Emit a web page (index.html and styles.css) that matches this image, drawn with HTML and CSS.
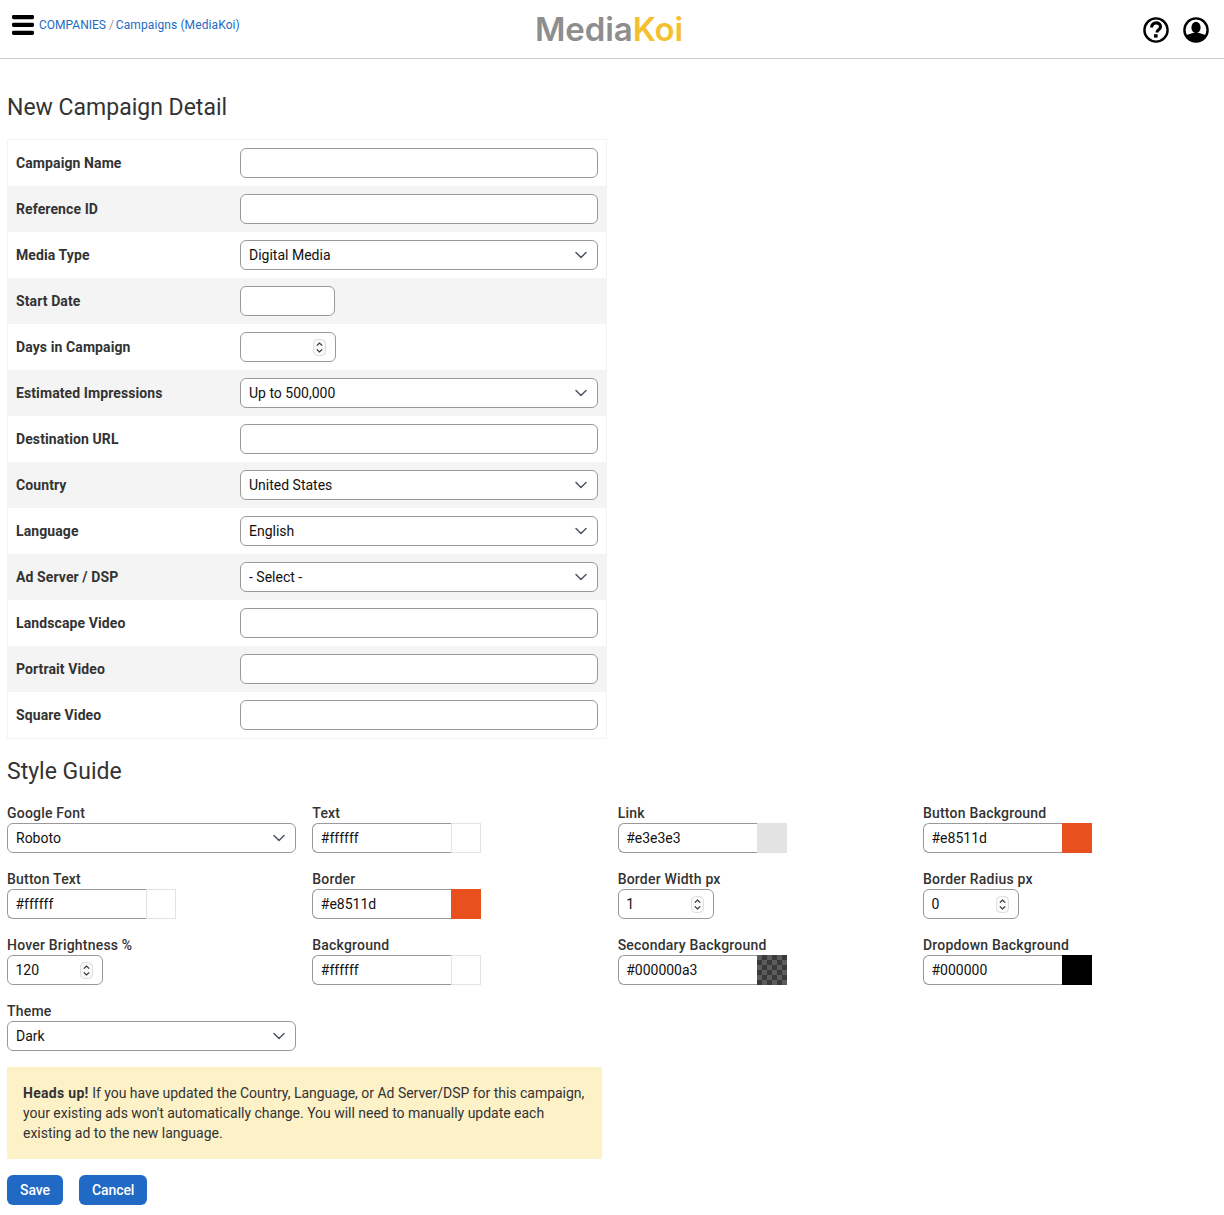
FILE: index.html
```html
<!DOCTYPE html>
<html lang="en">
<head>
    <meta charset="UTF-8">
    <title>New Campaign Detail</title>
    <link rel="stylesheet" href="styles.css">
</head>
<body>

<svg class="sprites" width="0" height="0">
    <symbol id="chevron" viewBox="0 0 12 8">
        <path d="M1 1.5l5 5 5-5" fill="none" stroke="#4b5563" stroke-width="1.5" stroke-linecap="round" stroke-linejoin="round"/>
    </symbol>
    <symbol id="spin" viewBox="0 0 13 17">
        <rect x="0.5" y="0.5" width="12" height="16" rx="4" fill="#fafafa" stroke="#dcdcdc"/>
        <path d="M3.8 6.6l2.7-2.6 2.7 2.6M3.8 10.4l2.7 2.6 2.7-2.6" fill="none" stroke="#333" stroke-width="1.2"/>
    </symbol>
</svg>

<header class="topbar">
    <div class="topbar-left">
        <svg class="burger" width="22" height="20" viewBox="0 0 22 20">
            <rect y="0" width="22" height="4.2" rx="1.4"/>
            <rect y="7.8" width="22" height="4.2" rx="1.4"/>
            <rect y="15.8" width="22" height="4.2" rx="1.4"/>
        </svg>
        <nav class="crumbs"><a href="#">COMPANIES</a> <span>/</span> <a href="#" class="current">Campaigns (MediaKoi)</a></nav>
    </div>
    <div class="logo">Media<span>Koi</span></div>
    <div class="topbar-right">
        <svg width="26" height="26" viewBox="0 0 26 26">
            <circle cx="13" cy="13" r="11.6" fill="none" stroke="#000" stroke-width="2.4"/>
            <path d="M8.6 10.4c0-2.9 2-4.5 4.5-4.5 2.7 0 4.4 1.6 4.4 3.8 0 1.7-1 2.6-2.1 3.3-1 .7-1.4 1.1-1.4 2.5" fill="none" stroke="#000" stroke-width="3.2"/>
            <rect x="11" y="17.2" width="3.6" height="3.4" fill="#000"/>
        </svg>
        <svg width="26" height="26" viewBox="0 0 26 26">
            <defs><clipPath id="user-clip"><circle cx="13" cy="13" r="11"/></clipPath></defs>
            <g clip-path="url(#user-clip)">
                <ellipse cx="13" cy="10.5" rx="4.6" ry="5.8"/>
                <path d="M2 26v-6c0-1.4 1.2-2 3-2.6l5-1.5h6l5 1.5c1.8.6 3 1.2 3 2.6v6z"/>
            </g>
            <circle cx="13" cy="13" r="11.6" fill="none" stroke="#000" stroke-width="2.4"/>
        </svg>
    </div>
</header>

<main class="page">
    <h1>New Campaign Detail</h1>

    <div class="detail-table">
        <div class="row"><label>Campaign Name</label><input class="field" type="text"></div>
        <div class="row"><label>Reference ID</label><input class="field" type="text"></div>
        <div class="row"><label>Media Type</label>
            <div class="select-wrap"><select class="field"><option>Digital Media</option></select><svg class="chevron"><use href="#chevron"/></svg></div>
        </div>
        <div class="row"><label>Start Date</label><input class="field date" type="text"></div>
        <div class="row"><label>Days in Campaign</label>
            <div class="number-wrap"><input class="field" type="text"><svg class="spin"><use href="#spin"/></svg></div>
        </div>
        <div class="row"><label>Estimated Impressions</label>
            <div class="select-wrap"><select class="field"><option>Up to 500,000</option></select><svg class="chevron"><use href="#chevron"/></svg></div>
        </div>
        <div class="row"><label>Destination URL</label><input class="field" type="text"></div>
        <div class="row"><label>Country</label>
            <div class="select-wrap"><select class="field"><option>United States</option></select><svg class="chevron"><use href="#chevron"/></svg></div>
        </div>
        <div class="row"><label>Language</label>
            <div class="select-wrap"><select class="field"><option>English</option></select><svg class="chevron"><use href="#chevron"/></svg></div>
        </div>
        <div class="row"><label>Ad Server / DSP</label>
            <div class="select-wrap"><select class="field"><option>- Select -</option></select><svg class="chevron"><use href="#chevron"/></svg></div>
        </div>
        <div class="row"><label>Landscape Video</label><input class="field" type="text"></div>
        <div class="row"><label>Portrait Video</label><input class="field" type="text"></div>
        <div class="row"><label>Square Video</label><input class="field" type="text"></div>
    </div>

    <h2>Style Guide</h2>

    <div class="style-grid">
        <div class="item"><label>Google Font</label>
            <div class="select-wrap"><select class="field"><option>Roboto</option></select><svg class="chevron"><use href="#chevron"/></svg></div>
        </div>
        <div class="item"><label>Text</label>
            <div class="color-wrap"><input class="field" type="text" value="#ffffff"><span class="swatch white"></span></div>
        </div>
        <div class="item"><label>Link</label>
            <div class="color-wrap"><input class="field" type="text" value="#e3e3e3"><span class="swatch grey"></span></div>
        </div>
        <div class="item"><label>Button Background</label>
            <div class="color-wrap"><input class="field" type="text" value="#e8511d"><span class="swatch orange"></span></div>
        </div>

        <div class="item"><label>Button Text</label>
            <div class="color-wrap"><input class="field" type="text" value="#ffffff"><span class="swatch white"></span></div>
        </div>
        <div class="item"><label>Border</label>
            <div class="color-wrap"><input class="field" type="text" value="#e8511d"><span class="swatch orange"></span></div>
        </div>
        <div class="item"><label>Border Width px</label>
            <div class="number-wrap"><input class="field" type="text" value="1"><svg class="spin"><use href="#spin"/></svg></div>
        </div>
        <div class="item"><label>Border Radius px</label>
            <div class="number-wrap"><input class="field" type="text" value="0"><svg class="spin"><use href="#spin"/></svg></div>
        </div>

        <div class="item"><label>Hover Brightness %</label>
            <div class="number-wrap"><input class="field" type="text" value="120"><svg class="spin"><use href="#spin"/></svg></div>
        </div>
        <div class="item"><label>Background</label>
            <div class="color-wrap"><input class="field" type="text" value="#ffffff"><span class="swatch white"></span></div>
        </div>
        <div class="item"><label>Secondary Background</label>
            <div class="color-wrap"><input class="field" type="text" value="#000000a3"><span class="swatch checker"></span></div>
        </div>
        <div class="item"><label>Dropdown Background</label>
            <div class="color-wrap"><input class="field" type="text" value="#000000"><span class="swatch black"></span></div>
        </div>

        <div class="item"><label>Theme</label>
            <div class="select-wrap"><select class="field"><option>Dark</option></select><svg class="chevron"><use href="#chevron"/></svg></div>
        </div>
    </div>

    <div class="notice"><strong>Heads up!</strong> If you have updated the Country, Language, or Ad Server/DSP for this campaign, your existing ads won't automatically change. You will need to manually update each existing ad to the new language.</div>

    <div class="actions">
        <button class="btn">Save</button>
        <button class="btn">Cancel</button>
    </div>
</main>

</body>
</html>
```

FILE: styles.css
```css
* {
    box-sizing: border-box;
}
body {
    font-family: Roboto, "Liberation Sans", sans-serif;
    font-size: 14px;
    color: #222;
    background-color: #fff;
    margin: 0;
    padding: 0;
}
.sprites {
    display: block;
    height: 0;
}
.topbar {
    display: flex;
    justify-content: space-between;
    height: 59px;
    border-bottom: 1px solid #ccc;
    position: relative;
}
.topbar-left {
    display: flex;
    align-items: flex-start;
    padding: 15px 0 0 12px;
}
.burger {
    fill: #000;
}
.crumbs {
    font-size: 12px;
    line-height: 14px;
    margin: 3px 0 0 5px;
    color: #999;
}
.crumbs a {
    color: #1e6bc6;
    text-decoration: none;
}
.crumbs .current {
    margin-left: -1px;
    letter-spacing: 0.1px;
}
.logo {
    position: absolute;
    left: 535px;
    top: 8px;
    font-family: Inter, sans-serif;
    font-size: 33px;
    line-height: 42px;
    font-weight: 600;
    letter-spacing: -0.1px;
    color: #8e8e8e;
}
.logo span {
    color: #f5c02e;
}
.topbar-right {
    display: flex;
    gap: 14px;
    padding: 17px 15.5px 0 0;
}
.page {
    padding: 0 7px;
}
h1, h2 {
    font-size: 23px;
    font-weight: 400;
    line-height: 28px;
    color: #333;
    margin: 0;
}
h1 {
    padding: 35px 0 17px;
}
h2 {
    padding: 19px 0 13px;
}
.detail-table {
    width: 600px;
    border: 1px solid #f3f3f3;
}
.row {
    display: flex;
    align-items: center;
    height: 46px;
    padding: 0 8px;
}
.row:nth-child(even) {
    background-color: #f4f4f4;
}
.row label {
    width: 224px;
    flex: none;
    font-weight: 700;
    letter-spacing: 0.1px;
    color: #333;
}
.row > .field, .row > .select-wrap {
    width: 358px;
}
.row > .date {
    width: 95px;
}
.field {
    display: block;
    height: 30px;
    width: 100%;
    padding: 0 8px;
    border: 1px solid #999;
    border-radius: 6px;
    background-color: #fff;
    font-family: inherit;
    font-size: 14px;
    color: #111;
    outline: none;
}
select.field {
    appearance: none;
}
.select-wrap, .number-wrap, .color-wrap {
    position: relative;
}
.chevron {
    position: absolute;
    right: 11px;
    top: 11px;
    width: 12px;
    height: 8px;
}
.number-wrap {
    width: 96px;
}
.number-wrap .field, .color-wrap .field {
    padding-left: 7.5px;
}
.spin {
    position: absolute;
    right: 10px;
    top: 7px;
    width: 13px;
    height: 17px;
}
.color-wrap {
    display: flex;
    width: 169px;
}
.color-wrap .field {
    width: 139px;
    border-radius: 6px 0 0 6px;
    border-right: none;
}
.swatch {
    display: block;
    width: 30px;
    height: 30px;
}
.white {
    background-color: #fff;
    border: 1px solid #e3e3e3;
}
.grey {
    background-color: #e3e3e3;
}
.orange {
    background-color: #e8511d;
}
.black {
    background-color: #000;
}
.checker {
    background-color: #5c5c5c;
    background-image: conic-gradient(#3a3a3a 25%, transparent 0 50%, #3a3a3a 0 75%, transparent 0);
    background-size: 10px 10px;
}
.style-grid {
    display: grid;
    grid-template-columns: repeat(4, 305.33px);
    row-gap: 6px;
}
.item {
    height: 60px;
}
.item label {
    display: block;
    font-weight: 500;
    letter-spacing: 0.2px;
    line-height: 16px;
    height: 14px;
    margin: 6px 0 4px;
    color: #333;
}
.item .select-wrap {
    width: 289px;
}
.notice {
    width: 595px;
    margin-top: 10px;
    padding: 16px;
    line-height: 20px;
    letter-spacing: -0.02px;
    background-color: #fdf1c8;
    color: #333;
}
.notice strong {
    font-weight: 700;
    letter-spacing: 0.3px;
}
.actions {
    display: flex;
    gap: 16px;
    margin-top: 16px;
}
.btn {
    height: 30px;
    min-width: 56px;
    padding: 0 13px;
    border: none;
    border-radius: 6px;
    background-color: #2069c4;
    color: #fff;
    font-family: inherit;
    font-size: 14px;
    font-weight: 500;
    letter-spacing: -0.1px;
}
```
